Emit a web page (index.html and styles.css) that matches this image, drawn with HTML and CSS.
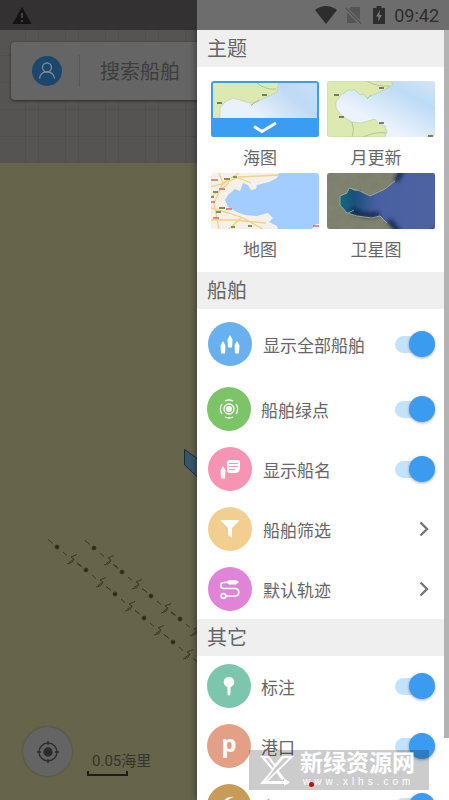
FILE: index.html
```html
<!DOCTYPE html>
<html lang="zh-CN">
<head>
<meta charset="utf-8">
<meta name="viewport" content="width=device-width, initial-scale=1">
<title>船舶地图</title>
<link rel="stylesheet" href="styles.css">
</head>
<body>
<div class="app">
  <svg class="map" viewBox="0 0 449 800" preserveAspectRatio="xMinYMin slice" aria-hidden="true">
    <defs>
      <pattern id="grid" width="40" height="27" patternUnits="userSpaceOnUse" x="25" y="1">
        <path d="M0 .5H40M.5 0V27M13.500 0V27" stroke="#504f4e" fill="none"/>
      </pattern>
      <g id="cable">
        <circle r="2" fill="#2b2814"/>
        <path d="M-9 -7.500l5 4M6 5l4 3.500M20 16.500l4 3" />
        <path d="M20 7.500l-6 2.500l3 2l-5 3.500M17 12l-2 3.500l-5 1.500" />
      </g>
    </defs>
    <rect width="449" height="800" fill="#66644b"/>
    <rect width="449" height="163" fill="#555453"/>
    <rect width="449" height="163" fill="url(#grid)"/>
    <path d="M184.500 449.500L204 463V483L184.500 465Z" fill="#38566a" stroke="#1c2c36"/>
    <g fill="none" stroke="#3d3b27" stroke-width="1">
      <use href="#cable" x="57" y="547"/><use href="#cable" x="86" y="570"/><use href="#cable" x="115" y="594"/><use href="#cable" x="144" y="618"/><use href="#cable" x="173" y="642"/>
      <use href="#cable" x="94" y="548"/><use href="#cable" x="122" y="572"/><use href="#cable" x="151" y="596"/><use href="#cable" x="180" y="619"/>
    </g>
  </svg>

  <main class="screen">
    <div class="search">
      <button class="avatar" type="button" aria-label="我的">
        <svg viewBox="0 0 30 30"><circle cx="15" cy="11.500" r="4.500"/><path d="M7.500 22.500C8 13.500 22 13.500 22.500 22.500"/></svg>
      </button>
      <input class="search-input" type="text" placeholder="搜索船舶" aria-label="搜索船舶">
    </div>
    <div class="tools">
      <button class="locate" type="button" aria-label="定位">
        <svg viewBox="0 0 24 24"><circle cx="12" cy="12" r="9"/><circle class="dot" cx="12" cy="12" r="4"/><path d="M12 1v4M12 19v4M1 12h4M19 12h4"/></svg>
      </button>
      <div class="scale"><span>0.05海里</span><i class="scale-bar"></i></div>
    </div>
  </main>

  <aside class="drawer">
    <h2 class="section">主题</h2>
    <div class="themes">
      <button class="theme" type="button" aria-pressed="true">
        <svg viewBox="0 0 108 56">
          <defs><linearGradient id="sea-near" x1="0" y1=".6" x2="1" y2="0"><stop offset=".3" stop-color="#ebf1fa"/><stop offset=".7" stop-color="#bfdaf5"/><stop offset="1" stop-color="#c9dff5"/></linearGradient></defs>
          <rect width="108" height="56" fill="url(#sea-near)"/>
          <path d="M0 0H68L66 11L54 17L46 21L39 22L29 19L22 17L14 21L9 27L9 37H0Z" fill="#dceab2" stroke="#b5cf9c" stroke-width=".6"/>
          <path d="M46 2Q54 9 65 8M48 19l-8 5M43 22l-3 3" fill="none" stroke="#9eb68a" stroke-width=".7"/>
          <path d="M51 14h5M6 22h5" stroke="#555" stroke-width="1.300"/>
          <path d="M0 37H108V56H0Z" fill="#3a9df2"/>
          <rect x="1" y="1" width="106" height="54" rx="2" fill="none" stroke="#3a9df2" stroke-width="2"/>
          <path d="M43 45.500L51 50.500L65 42" fill="none" stroke="#fff" stroke-width="3"/>
        </svg>
        <span>海图</span>
      </button>
      <button class="theme" type="button" aria-pressed="false">
        <svg viewBox="0 0 108 56">
          <defs><linearGradient id="sea" x1="0" y1="1" x2="1" y2="0"><stop offset=".35" stop-color="#edf3fb"/><stop offset=".75" stop-color="#bddbf6"/><stop offset="1" stop-color="#d3e5f7"/></linearGradient></defs>
          <rect width="108" height="56" fill="url(#sea)"/>
          <path d="M0 0H64L66 4L55 10L46 14L40 17L36 13L33 14L28 9L22 9L15 13L9 21L9 27L14 34L25 41L34 42L48 38L51 42L58 45L60 51L58 56H0Z" fill="#dceab2" stroke="#b5cf9c" stroke-width=".6"/>
          <path d="M40 0Q49 6 63 5M25 41Q28 49 25 56M36 56Q50 50 59 52M44 14l-4 4" fill="none" stroke="#9eb68a" stroke-width=".7"/>
          <path d="M98 56l5-3h5v3Z" fill="#dceab2"/>
          <path d="M52 7h5M7 14h5M12 36h5M52 42h5M101 55h5" stroke="#555" stroke-width="1.300"/>
        </svg>
        <span>月更新</span>
      </button>
      <button class="theme" type="button" aria-pressed="false">
        <svg viewBox="0 0 108 56">
          <rect width="108" height="56" fill="#f5f1e8"/>
          <path d="M0 14L14 10L28 4L68 2M8 0L12 10L3 30L8 56M0 35L18 40L32 45L52 56M12 10L28 0M25 4L40 10M0 47L24 47L55 50M18 56L30 45M0 24L18 10" fill="none" stroke="#f4cf88" stroke-width="1.300"/>
          <path d="M68 0L66 5L58 9L46 12L45 16L40 17L37 12L32 10L29 18L24 16L17 22L14 27L17 34L26 39L34 42L46 43L57 40L62 45L58 49L66 53L67 56H108V0Z" fill="#a3ccff"/>
          <path d="M101 56l4-5h3v5Z" fill="#f5f1e8"/>
          <path d="M13 6h6M22 4h4M2 19h5M8 35h6M5 39h5M20 54h4M37 53h4M0 24h3" stroke="#7d984a" stroke-width="2"/>
          <path d="M0 7h7M8 16h6M15 36h6M2 45h6M0 29h4M102 53h6" stroke="#db675f" stroke-width="1.500"/>
        </svg>
        <span>地图</span>
      </button>
      <button class="theme" type="button" aria-pressed="false">
        <svg viewBox="0 0 108 56">
          <defs>
            <linearGradient id="deep"><stop offset="0" stop-color="#126b82"/><stop offset=".15" stop-color="#184f78"/><stop offset=".38" stop-color="#4860a2"/><stop offset="1" stop-color="#4e62a0"/></linearGradient>
            <filter id="soft"><feGaussianBlur stdDeviation="2"/></filter>
            <filter id="terrain"><feTurbulence type="fractalNoise" baseFrequency=".12" numOctaves="3"/><feColorMatrix values="0 0 0 0 .22 0 0 0 0 .25 0 0 0 0 .18 .8 .8 0 0 -.45"/></filter>
          </defs>
          <rect width="108" height="56" fill="#7c7e69"/>
          <rect width="108" height="56" filter="url(#terrain)"/>
          <path d="M71 0L68 8L58 16L50 20L43 23L36 20L33 17L28 18L22 15L20 20L13 23L13 32L20 40L30 43L45 45L53 43L58 48L62 51L67 56H108V0Z" fill="url(#deep)"/>
          <path d="M75 -3L69 8M62 47L72 59M24 37Q38 44 52 41M105 58h8" fill="none" stroke="#101d38" stroke-width="4" filter="url(#soft)"/>
          <path d="M68 8L58 16L43 23L33 18L22 15L20 20L13 23L13 32L20 40L30 43L45 45L53 43L60 50M21 40l6-3" fill="none" stroke="#a6a794" stroke-width=".9"/>
        </svg>
        <span>卫星图</span>
      </button>
    </div>

    <h2 class="section">船舶</h2>
    <ul class="rows">
      <li><label class="row tall">
        <svg class="badge blue" viewBox="0 0 44 44"><path d="M22 13l2.500 4.500L24 25.500h-4l-.5-8ZM15 19l2.500 4.500L17 31.500h-4l-.5-8ZM29 19l2.500 4.500L31 31.500h-4l-.5-8Z"/></svg>
        <span class="name">显示全部船舶</span><input class="switch" type="checkbox" checked>
      </label></li>
      <li><label class="row near">
        <svg class="badge green" viewBox="0 0 44 44"><circle cx="22" cy="22" r="3"/><g class="line"><circle cx="22" cy="22" r="5"/><path d="M18 14a9 9 0 0 1 8 0M18 30a9 9 0 0 0 8 0M15 17a9 9 0 0 0 0 10M29 17a9 9 0 0 1 0 10"/></g></svg>
        <span class="name">船舶绿点</span><input class="switch" type="checkbox" checked>
      </label></li>
      <li><label class="row">
        <svg class="badge pink" viewBox="0 0 44 44"><path d="M15 19l2.500 4.500L17 31.500h-4l-.5-8ZM22 13h8q2 0 2 2v6q0 5-5 5h-5q-3 0-3-3v-7q0-3 3-3Z"/><path d="M21 16.500h9M21 19.500h9M21 22.500h6" stroke="#f793b3" stroke-width="1.200"/></svg>
        <span class="name">显示船名</span><input class="switch" type="checkbox" checked>
      </label></li>
      <li><a class="row" href="#filter">
        <svg class="badge sand" viewBox="0 0 44 44"><path d="M13 13H31V14L24 21V31L20 28V21L13 14Z"/></svg>
        <span class="name">船舶筛选</span><svg class="chevron" viewBox="0 0 10 16"><path d="M1.500 1.500L8 8L1.500 14.500"/></svg>
      </a></li>
      <li><a class="row" href="#track">
        <svg class="badge violet" viewBox="0 0 44 44"><path d="M18 15l3-2h7l3 2-3 2.500h-7Z"/><g class="line bold"><path d="M20 15.500h-4c-4.500 0-4.500 6 0 6h11c5 0 5 7.500 0 7.500h-9"/><circle cx="15.500" cy="29" r="2.300"/></g></svg>
        <span class="name">默认轨迹</span><svg class="chevron" viewBox="0 0 10 16"><path d="M1.500 1.500L8 8L1.500 14.500"/></svg>
      </a></li>
    </ul>

    <h2 class="section">其它</h2>
    <ul class="rows">
      <li><label class="row near">
        <svg class="badge mint" viewBox="0 0 44 44"><circle cx="22" cy="18" r="5.300"/><path d="M20.500 22h3v8q0 1.500-1.500 1.500t-1.500-1.500Z"/></svg>
        <span class="name">标注</span><input class="switch" type="checkbox" checked>
      </label></li>
      <li><label class="row near">
        <span class="badge coral">p</span>
        <span class="name">港口</span><input class="switch" type="checkbox" checked>
      </label></li>
      <li><label class="row near">
        <svg class="badge brown" viewBox="0 0 44 44"><path d="M27 13C20 12 14 17 15 24C16 32 27 33 29 25C30 19 24 16 20 18C21 15 24 14 27 13Z"/><circle cx="22" cy="23" r="3" fill="#c89b59"/></svg>
        <span class="name">台风</span><input class="switch" type="checkbox" checked>
      </label></li>
    </ul>
    <div class="scrollbar"></div>
  </aside>

  <header class="status">
    <svg class="warn" viewBox="0 0 20 17"><path d="M10 0L19.500 17H.5Z" fill="#141414"/><path d="M10 6v5M10 13v2" stroke="#444" stroke-width="2"/></svg>
    <svg class="wifi" viewBox="0 0 22 18"><path d="M0 4Q11 -4 22 4L11 18Z"/></svg>
    <svg class="sim" viewBox="0 0 17 18"><path d="M4 3L6 1H14Q15 1 15 2V14ZM2 6.500L12.500 17H3Q2 17 2 16Z" fill="#555"/><path d="M.5 2L16 17.500" stroke="#555" stroke-width="1.500"/></svg>
    <svg class="battery" viewBox="0 0 12 18"><path d="M3.500 0h5v2H12V18H0V2H3.500Z"/><path d="M7 4L3 10.500h2.500L5 15.500L9 9H6.500Z" fill="#777"/></svg>
    <time>09:42</time>
  </header>

  <div class="watermark">
    <svg viewBox="0 0 30 30"><path d="M0 1H9L15 9L22 1H34L8 26H24V23L30 27.500L24 31V29H0L12 15ZM5 3L13 13L14 11L8 3ZM24 3L15 13L5 27L29 3Z" fill="#fff" fill-rule="evenodd"/><path d="M17 16L23 24" stroke="#fff" stroke-width="3"/></svg>
    <div class="watermark-text"><strong>新绿资源网</strong><small>www.xlhs.com</small></div>
    <i class="pin"></i>
  </div>
</div>
</body>
</html>
```
FILE: styles.css
```css
* { box-sizing: border-box; }

body {
  margin: 0;
  font-family: Roboto, "Noto Sans CJK SC", sans-serif;
  color: #666;
}

button, input { font: inherit; color: inherit; }
button { border: 0; padding: 0; background: none; }

.app {
  position: relative;
  display: grid;
  grid-template-columns: 197px 1fr;
  height: 100vh;
  overflow: hidden;
  background: #66644b;
}

.map {
  grid-area: 1 / 1 / 2 / 3;
  width: 100%;
  height: 100%;
}

.screen {
  grid-area: 1 / 1 / 2 / 3;
  display: flex;
  flex-direction: column;
  justify-content: space-between;
  padding: 42px 11px 24px;
}

.search {
  display: flex;
  align-items: center;
  height: 58px;
  padding-left: 21px;
  border-radius: 4px;
  background: #656565;
  box-shadow: 0 1px 3px #2b2b2b;
}

.avatar {
  width: 30px;
  height: 30px;
  margin-right: 17px;
  border-radius: 50%;
  background: #1c476d;
}

.avatar svg {
  display: block;
  fill: none;
  stroke: #7d8790;
  stroke-width: 1.4;
}

.search-input {
  flex: 1;
  min-width: 0;
  height: 32px;
  padding: 2px 0 0 20px;
  border: 0;
  border-left: 1px solid #575757;
  background: none;
  font-size: 20px;
}

.search-input::placeholder { color: #3d3d3d; opacity: 1; }

.tools {
  display: flex;
  align-items: flex-end;
  gap: 15px;
  padding-left: 12px;
}

.locate {
  display: grid;
  place-items: center;
  width: 49px;
  height: 49px;
  border-radius: 50%;
  background: #646464;
  box-shadow: 0 0 2px #44433a;
}

.locate svg {
  width: 24px;
  fill: none;
  stroke: #2d2d2d;
  stroke-width: 1.4;
}

.locate .dot { fill: #2a2a2a; }

.scale {
  font-size: 15px;
  line-height: 20px;
  color: #35342a;
}

.scale span { display: block; padding-left: 5px; }

.scale-bar {
  display: block;
  width: 41px;
  height: 5px;
  border: 2px solid #1d1d18;
  border-top: 0;
}

.drawer {
  position: relative;
  grid-area: 1 / 2;
  overflow: hidden;
  border-top: 30px solid #6d6d6d;
  background: #fff;
  box-shadow: 0 0 8px rgba(0, 0, 0, .5);
}

.section {
  margin: 0;
  padding: 2px 0 0 10px;
  background: #efefef;
  font-size: 20px;
  font-weight: 400;
  line-height: 35px;
}

.themes {
  display: grid;
  grid-template-columns: 1fr 1fr;
  column-gap: 8px;
  padding: 14px 14px 7px;
}

.theme {
  font-size: 17px;
  line-height: 30px;
}

.theme svg {
  display: block;
  width: 100%;
  border-radius: 3px;
}

.theme span {
  display: block;
  padding: 6px 10px 0 0;
}

.rows {
  margin: 0;
  padding: 0;
  list-style: none;
}

.row {
  display: flex;
  align-items: center;
  gap: 11px;
  height: 60px;
  padding: 0 14px 0 11px;
  color: inherit;
  font-size: 17px;
  text-decoration: none;
}

.row.tall { height: 70px; }
.row.near { padding-left: 10px; gap: 10px; }

.name { flex: 1; }

.badge {
  flex: none;
  width: 44px;
  height: 44px;
  border-radius: 50%;
  fill: #fff;
}

.badge .line { fill: none; stroke: #fff; stroke-width: 1.3; }
.badge .bold { stroke-width: 1.7; }

.blue { background: #69b0ee; }
.green { background: #7dc468; }
.pink { background: #f793b3; }
.sand { background: #f2cf90; }
.violet { background: #e084d8; }
.mint { background: #7bc6ad; }
.brown { background: #c89b59; }

.coral {
  background: #e4a087;
  color: #fff;
  font: 700 24px/38px "Noto Sans", sans-serif;
  text-align: center;
}

.switch {
  appearance: none;
  display: flex;
  align-items: center;
  justify-content: flex-end;
  width: 34px;
  height: 17px;
  margin: 0 6px 0 0;
  border-radius: 9px;
  background: #c3e2fc;
}

.switch::before {
  content: "";
  flex: none;
  width: 26px;
  height: 26px;
  margin-right: -6px;
  border-radius: 50%;
  background: #3a9bef;
  box-shadow: 0 1px 3px rgba(0, 0, 0, .35);
}

.chevron {
  width: 10px;
  height: 16px;
  margin-right: 6px;
  fill: none;
  stroke: #757575;
  stroke-width: 2.4;
}

.scrollbar {
  position: absolute;
  top: 0;
  right: 0;
  width: 5px;
  height: 92%;
  background: #b3b3b3;
}

.status {
  grid-area: 1 / 1 / 2 / 3;
  align-self: start;
  position: relative;
  display: flex;
  align-items: center;
  height: 30px;
  padding: 0 10px 0 12px;
  background: linear-gradient(90deg, #333131 197px, transparent 197px);
  fill: #2d2d2d;
  color: #2d2d2d;
  font-size: 18px;
}

.warn { width: 20px; margin-right: auto; }
.wifi { width: 22px; margin-right: 8px; }
.sim { width: 17px; margin-right: 11px; }
.battery { width: 12px; margin-right: 9px; }

.watermark {
  position: absolute;
  right: 20px;
  bottom: 10px;
  display: flex;
  align-items: center;
  gap: 10px;
  width: 180px;
  height: 40px;
  padding-left: 11px;
  background: rgba(0, 0, 0, .2);
  color: #fff;
}

.watermark svg { width: 30px; overflow: visible; }
.watermark-text { white-space: nowrap; }

.watermark strong {
  display: block;
  font-size: 23px;
  line-height: 24px;
}

.watermark small {
  display: block;
  padding-left: 3px;
  font: 10px/12px "Liberation Sans", sans-serif;
  letter-spacing: 4px;
}

.pin {
  position: absolute;
  left: 60px;
  bottom: 3px;
  width: 5px;
  height: 5px;
  border-radius: 50%;
  background: #c00d0d;
}
```
